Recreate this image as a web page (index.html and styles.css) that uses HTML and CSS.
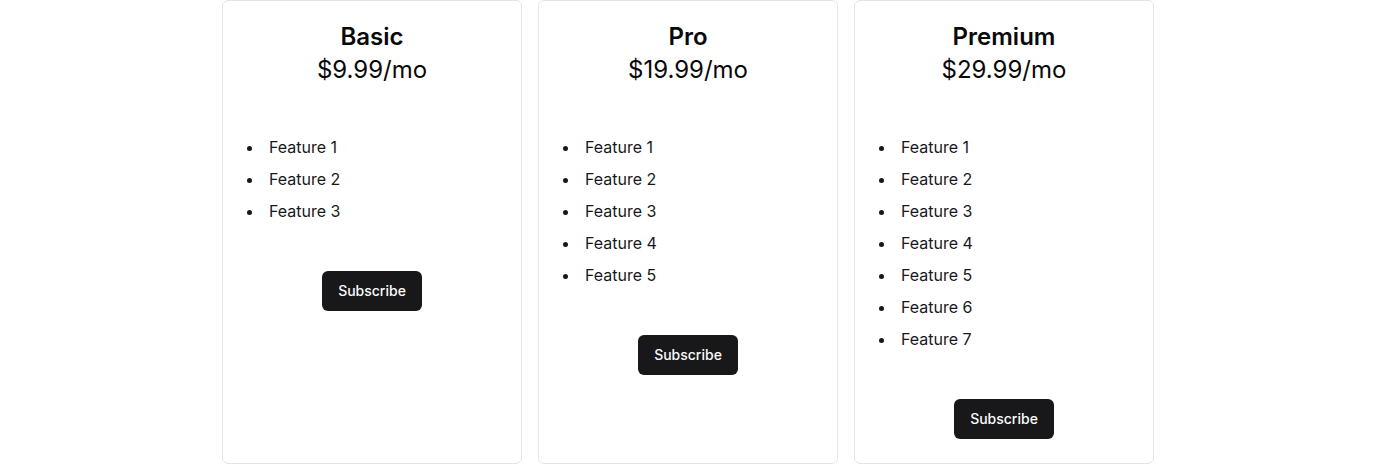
FILE: index.html
```html
<!DOCTYPE html>
<html>
<head>
<meta charset="utf-8">
<link rel="stylesheet" href="styles.css">
</head>
<body>
<div class="plans">
  <div class="card">
    <h2 class="title">Basic</h2>
    <p class="price">$9.99/mo</p>
    <ul class="features">
      <li>Feature 1</li>
      <li>Feature 2</li>
      <li>Feature 3</li>
    </ul>
    <button class="btn">Subscribe</button>
  </div>
  <div class="card">
    <h2 class="title">Pro</h2>
    <p class="price">$19.99/mo</p>
    <ul class="features">
      <li>Feature 1</li>
      <li>Feature 2</li>
      <li>Feature 3</li>
      <li>Feature 4</li>
      <li>Feature 5</li>
    </ul>
    <button class="btn">Subscribe</button>
  </div>
  <div class="card">
    <h2 class="title">Premium</h2>
    <p class="price">$29.99/mo</p>
    <ul class="features">
      <li>Feature 1</li>
      <li>Feature 2</li>
      <li>Feature 3</li>
      <li>Feature 4</li>
      <li>Feature 5</li>
      <li>Feature 6</li>
      <li>Feature 7</li>
    </ul>
    <button class="btn">Subscribe</button>
  </div>
</div>
</body>
</html>
```
FILE: styles.css
```css
html, body {
  margin: 0;
  padding: 0;
  background: #ffffff;
}
body {
  font-family: Inter, "Liberation Sans", sans-serif;
  color: #18181b;
}
.plans {
  display: flex;
  justify-content: center;
  align-items: stretch;
  gap: 16px;
}
.card {
  box-sizing: border-box;
  width: 300px;
  border: 1px solid #e4e4e7;
  border-radius: 6px;
  padding: 24px;
  display: flex;
  flex-direction: column;
  align-items: stretch;
}
.title {
  margin: 0;
  font-size: 24px;
  line-height: 24px;
  font-weight: 600;
  text-align: center;
  color: #09090b;
}
.price {
  margin: 5px 0 0;
  font-size: 24px;
  line-height: 32px;
  font-weight: 400;
  text-align: center;
  color: #09090b;
}
.features {
  margin: 49px 0 48px;
  padding-left: 17px;
  font-size: 16px;
  line-height: 24px;
}
.features li {
  padding-left: 5px;
}
.features li + li {
  margin-top: 8px;
}
.btn {
  align-self: center;
  height: 40px;
  padding: 0 16px 1px;
  border: none;
  border-radius: 6px;
  background: #18181b;
  color: #fafafa;
  font-family: Inter, "Liberation Sans", sans-serif;
  font-size: 14px;
  font-weight: 500;
}
```
